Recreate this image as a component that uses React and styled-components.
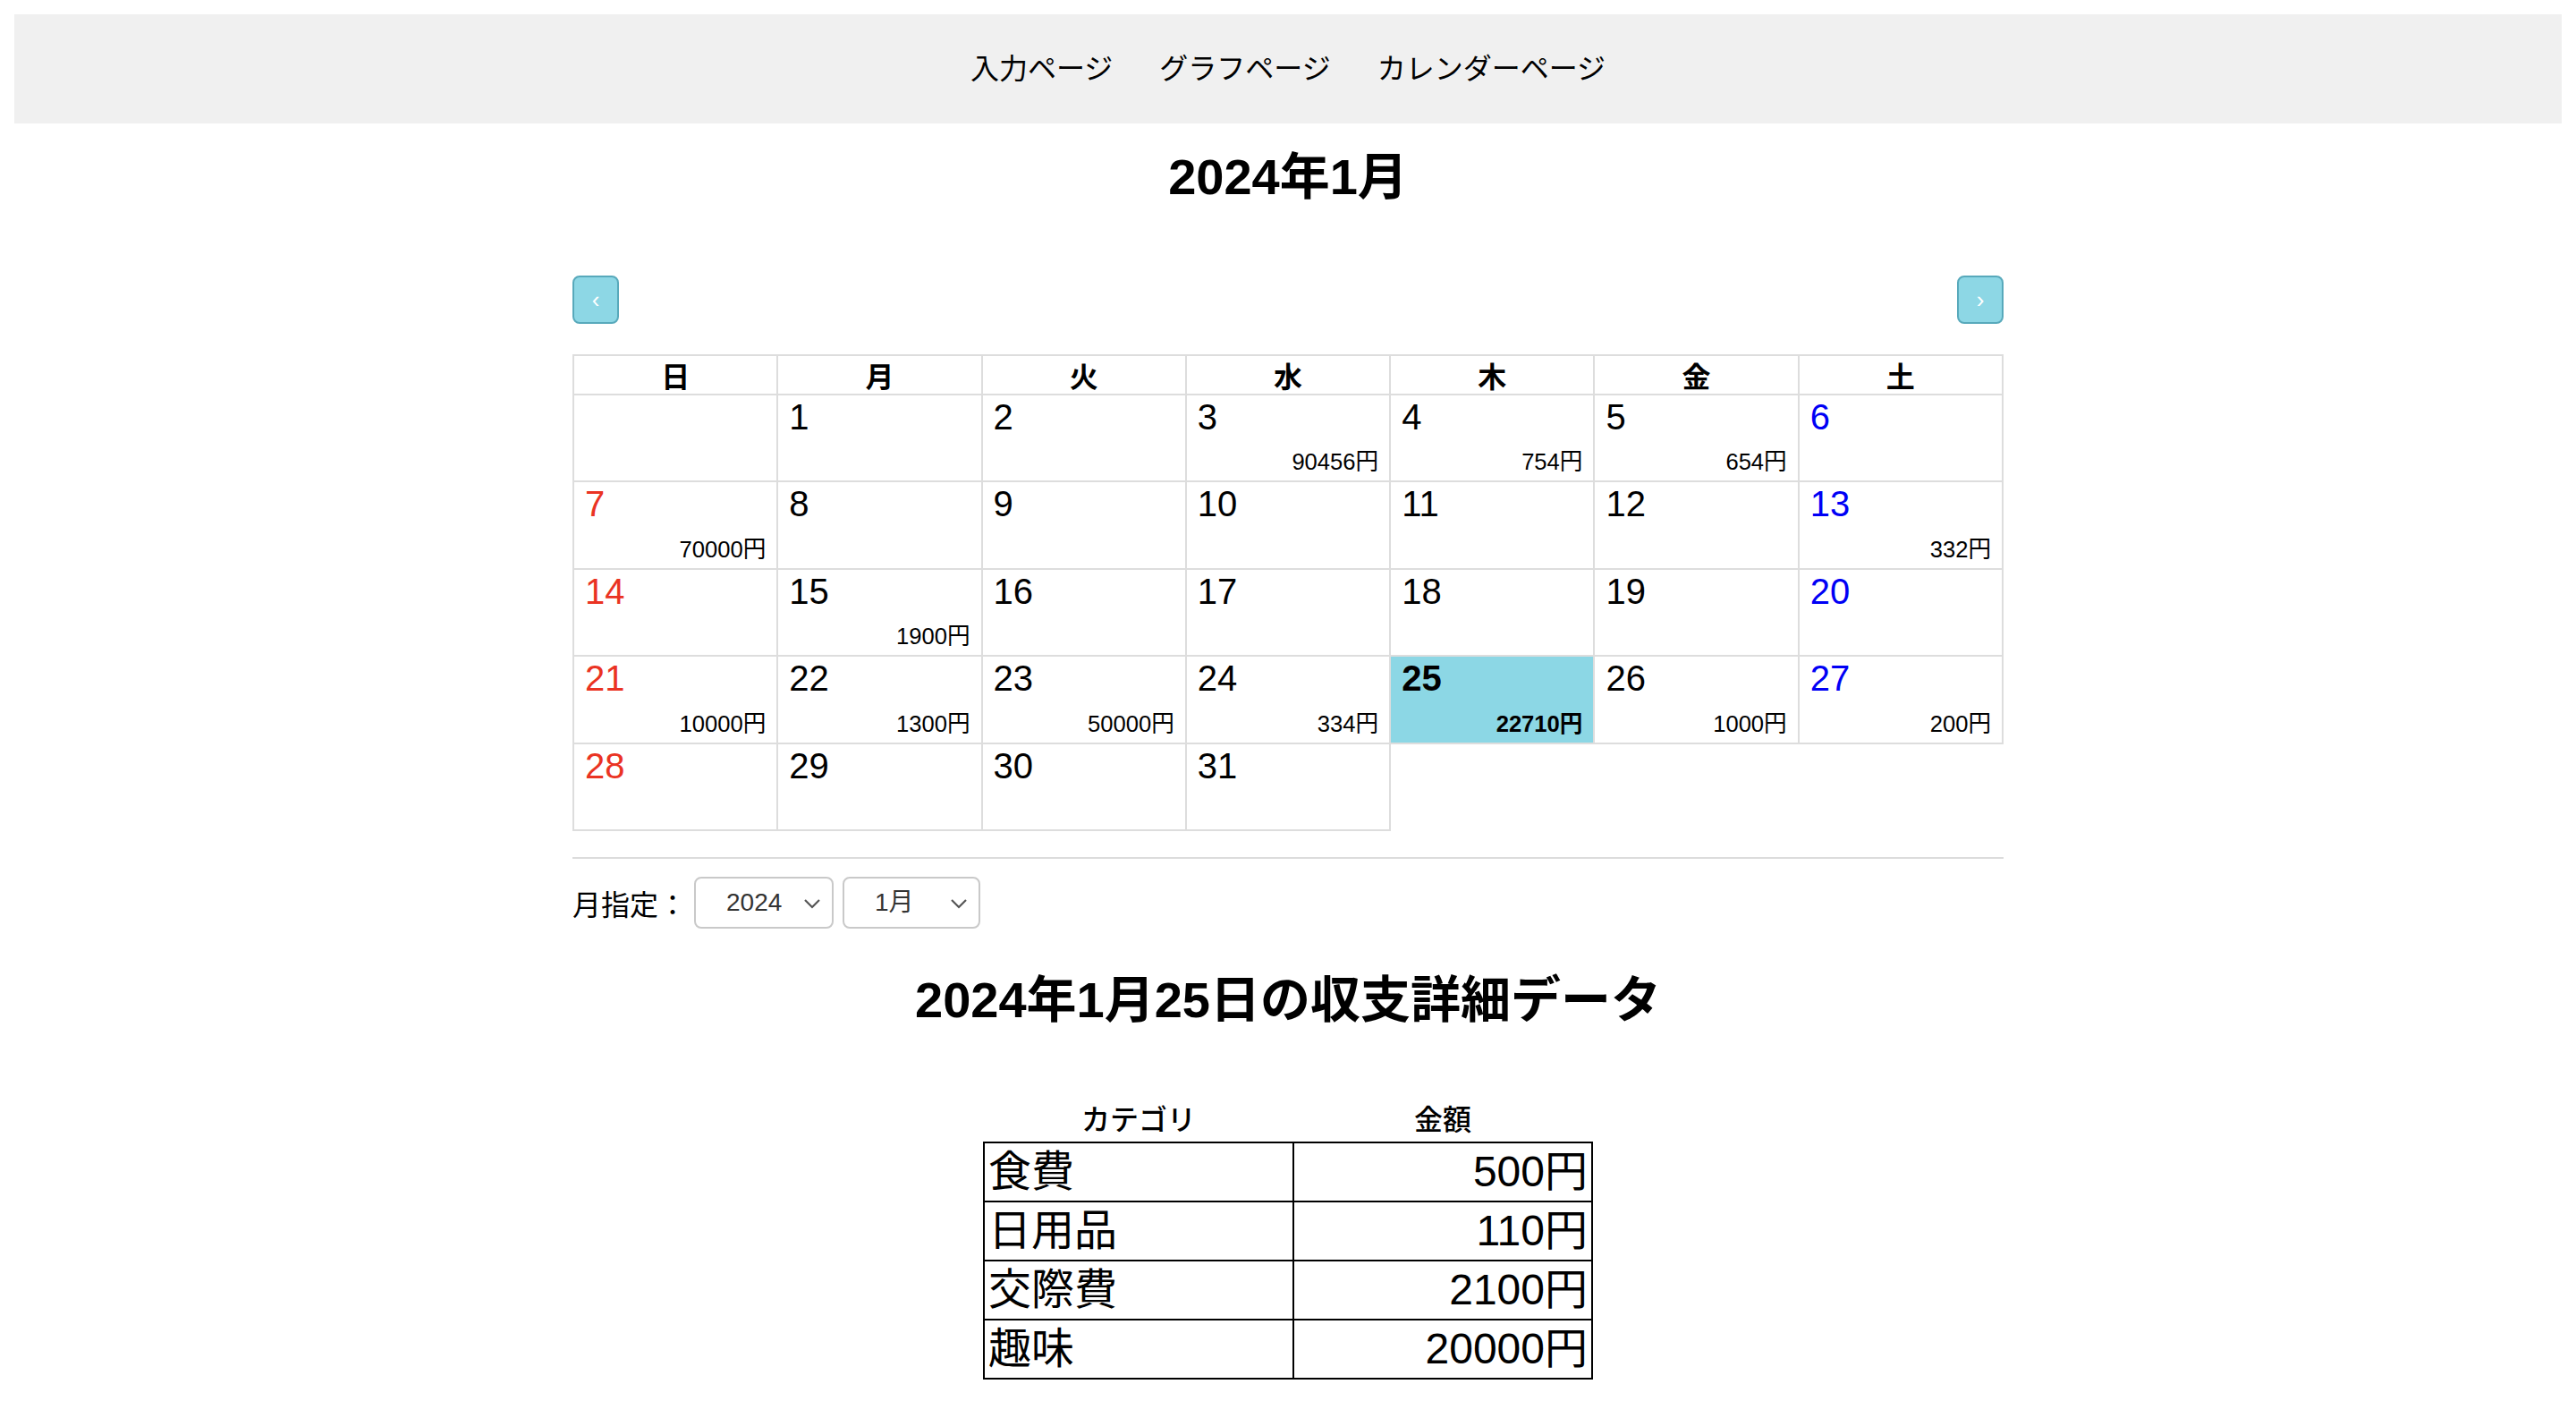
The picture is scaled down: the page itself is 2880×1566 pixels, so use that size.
import React from "react";
import styled, { createGlobalStyle } from "styled-components";

const FONT = `"Liberation Sans", "Noto Sans CJK JP", sans-serif`;

const GlobalStyle = createGlobalStyle`
  html {
    zoom: 2;
  }
  body {
    margin: 8px;
    font-family: ${FONT};
    color: #000;
    background: #fff;
  }
`;

const Header = styled.nav`
  height: 61px;
  background: #f0f0f0;
  display: flex;
  align-items: center;
  justify-content: center;
  gap: 26px;
`;

const NavLink = styled.a`
  font-size: 16px;
  color: #000;
  text-decoration: none;
  line-height: 20px;
`;

const Main = styled.main`
  width: 800px;
  margin: 0 auto;
  display: flex;
  flex-direction: column;
`;

const Title = styled.h1`
  margin: 13px 0 38px;
  font-size: 28px;
  line-height: 34px;
  font-weight: 700;
  text-align: center;
`;

const ButtonRow = styled.div`
  display: flex;
  justify-content: space-between;
  margin-bottom: 17px;
`;

const NavButton = styled.button`
  width: 26px;
  height: 27px;
  padding: 0;
  border: 1px solid #58a9bb;
  border-radius: 4px;
  background: #8dd7e5;
  color: #fff;
  font-family: ${FONT};
  font-size: 13px;
  line-height: 1;
  display: flex;
  align-items: center;
  justify-content: center;
`;

const Grid = styled.div`
  display: grid;
  grid-template-columns: repeat(7, 1fr);
  border-top: 1px solid #ddd;
  border-left: 1px solid #ddd;
`;

const WeekHead = styled.div`
  height: 21px;
  border-right: 1px solid #ddd;
  border-bottom: 1px solid #ddd;
  display: flex;
  align-items: center;
  justify-content: center;
  font-size: 16px;
  font-weight: 700;
`;

const Cell = styled.div`
  box-sizing: border-box;
  height: 48.7px;
  border-right: 1px solid #ddd;
  border-bottom: 1px solid #ddd;
  padding: 1px 6px 3px 6px;
  display: flex;
  flex-direction: column;
  justify-content: space-between;
  background: ${(p) => (p.$selected ? "#8cd7e5" : "#fff")};
  font-weight: ${(p) => (p.$selected ? 700 : 400)};
`;

const DayNum = styled.span`
  font-size: 20px;
  line-height: 22px;
  color: ${(p) => (p.$dow === 0 ? "rgb(234,51,35)" : p.$dow === 6 ? "rgb(0,0,245)" : "#000")};
`;

const Amount = styled.span`
  font-size: 12.8px;
  line-height: 15px;
  text-align: right;
`;

const Rule = styled.hr`
  margin: 14.5px 0 0;
  border: none;
  border-top: 1px solid #dcdcdc;
  height: 0;
`;

const SelectRow = styled.div`
  display: flex;
  align-items: center;
  margin-top: 10px;
  height: 29px;
`;

const Label = styled.span`
  font-size: 16px;
  margin-right: 4px;
`;

const SelectWrap = styled.div`
  position: relative;
  width: ${(p) => p.$w}px;
  height: 29px;
  margin-right: 5px;
`;

const Select = styled.select`
  appearance: none;
  -webkit-appearance: none;
  width: 100%;
  height: 100%;
  border: 1px solid #c9c9c9;
  border-radius: 4px;
  background: #fff;
  padding: 0 0 0 17px;
  font-family: ${FONT};
  font-size: 14px;
  color: #333;
`;

const Chevron = styled.svg`
  position: absolute;
  right: 7px;
  top: 12px;
  width: 10px;
  height: 6px;
  pointer-events: none;
`;

const DetailTitle = styled.h2`
  margin: 23px 0 38px;
  font-size: 28px;
  line-height: 34px;
  font-weight: 700;
  text-align: center;
`;

const Table = styled.table`
  border-collapse: collapse;
  margin: 0 auto;
  width: 341px;
`;

const Th = styled.th`
  font-size: 16px;
  font-weight: 500;
  line-height: 20px;
  padding: 2px;
  text-align: center;
`;

const Td = styled.td`
  border: 1px solid #000;
  font-size: 24px;
  line-height: 30px;
  padding: 1px 2px;
  text-align: ${(p) => (p.$right ? "right" : "left")};
  width: ${(p) => (p.$w ? p.$w + "px" : "auto")};
`;

const amounts = {
  3: 90456, 4: 754, 5: 654, 7: 70000, 13: 332, 15: 1900, 21: 10000,
  22: 1300, 23: 50000, 24: 334, 25: 22710, 26: 1000, 27: 200,
};

const weekdays = ["日", "月", "火", "水", "木", "金", "土"];

const details = [
  ["食費", "500円"],
  ["日用品", "110円"],
  ["交際費", "2100円"],
  ["趣味", "20000円"],
];

function ChevronIcon() {
  return (
    <Chevron viewBox="0 0 10 6">
      <path d="M1 1 L5 5 L9 1" fill="none" stroke="#555" strokeWidth="1.1" />
    </Chevron>
  );
}

export default function App() {
  const cells = [];
  const offset = 1; // Jan 1 2024 is Monday
  for (let i = 0; i < offset; i++) cells.push({ key: "e" + i, empty: true });
  for (let d = 1; d <= 31; d++) cells.push({ key: d, day: d, dow: (d + offset - 1) % 7 });

  return (
    <>
      <GlobalStyle />
      <Header>
        <NavLink href="#">入力ページ</NavLink>
        <NavLink href="#">グラフページ</NavLink>
        <NavLink href="#">カレンダーページ</NavLink>
      </Header>
      <Main>
        <Title>2024年1月</Title>
        <ButtonRow>
          <NavButton>‹</NavButton>
          <NavButton>›</NavButton>
        </ButtonRow>
        <Grid>
          {weekdays.map((w) => (
            <WeekHead key={w}>{w}</WeekHead>
          ))}
          {cells.map((c) =>
            c.empty ? (
              <Cell key={c.key} />
            ) : (
              <Cell key={c.key} $selected={c.day === 25}>
                <DayNum $dow={c.dow}>{c.day}</DayNum>
                <Amount>{amounts[c.day] ? amounts[c.day] + "円" : ""}</Amount>
              </Cell>
            )
          )}
        </Grid>
        <Rule />
        <SelectRow>
          <Label>月指定：</Label>
          <SelectWrap $w={78}>
            <Select defaultValue="2024">
              <option>2024</option>
            </Select>
            <ChevronIcon />
          </SelectWrap>
          <SelectWrap $w={77}>
            <Select defaultValue="1月">
              <option>1月</option>
            </Select>
            <ChevronIcon />
          </SelectWrap>
        </SelectRow>
        <DetailTitle>2024年1月25日の収支詳細データ</DetailTitle>
        <Table>
          <thead>
            <tr>
              <Th>カテゴリ</Th>
              <Th>金額</Th>
            </tr>
          </thead>
          <tbody>
            {details.map(([cat, amt]) => (
              <tr key={cat}>
                <Td $w={168}>{cat}</Td>
                <Td $right>{amt}</Td>
              </tr>
            ))}
          </tbody>
        </Table>
      </Main>
    </>
  );
}
